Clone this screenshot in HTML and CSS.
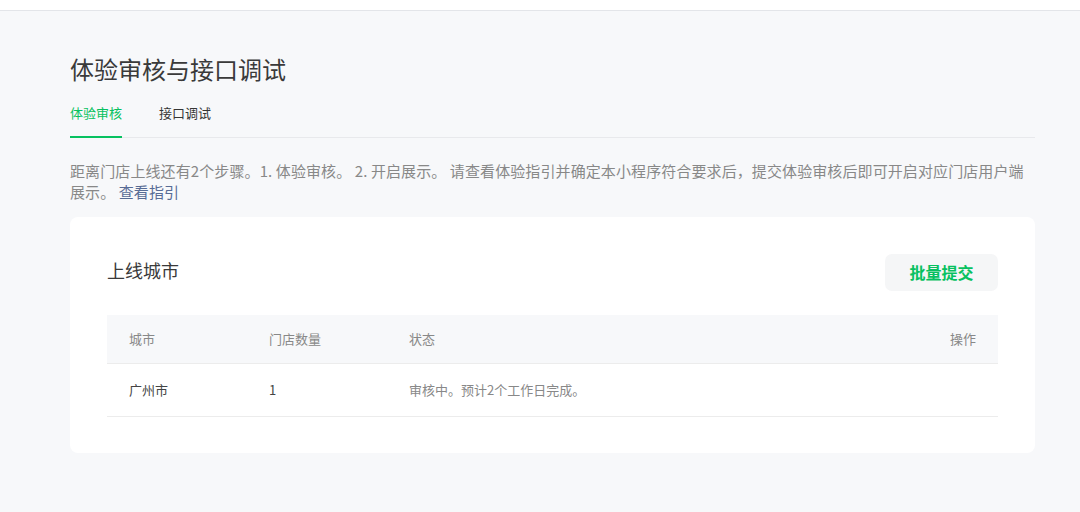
FILE: index.html
```html
<!DOCTYPE html>
<html lang="zh-CN">
<head>
<meta charset="utf-8">
<title>体验审核与接口调试</title>
<link rel="stylesheet" href="styles.css">
</head>
<body>
<div class="topbar"></div>
<main class="main">
  <h1 class="title">体验审核与接口调试</h1>
  <nav class="tabs">
    <a class="tab active">体验审核</a>
    <a class="tab">接口调试</a>
  </nav>
  <p class="desc">距离门店上线还有2个步骤。1. 体验审核。 2. 开启展示。 请查看体验指引并确定本小程序符合要求后，提交体验审核后即可开启对应门店用户端展示。 <a class="link">查看指引</a></p>
  <section class="card">
    <div class="card-head">
      <h2 class="card-title">上线城市</h2>
      <button class="btn">批量提交</button>
    </div>
    <table class="table">
      <thead>
        <tr>
          <th class="c-city">城市</th>
          <th class="c-num">门店数量</th>
          <th>状态</th>
          <th class="c-op">操作</th>
        </tr>
      </thead>
      <tbody>
        <tr>
          <td class="c-city">广州市</td>
          <td class="c-num">1</td>
          <td class="muted">审核中。预计2个工作日完成。</td>
          <td class="c-op"></td>
        </tr>
      </tbody>
    </table>
  </section>
</main>
</body>
</html>
```
FILE: styles.css
```css
* { box-sizing: border-box; }
html, body { margin: 0; padding: 0; }
body {
  background: #f7f8fa;
  font-family: "Noto Sans CJK SC", "Noto Sans", sans-serif;
  color: #353535;
}
.topbar {
  height: 11px;
  background: #fff;
  border-bottom: 1px solid #e3e5e9;
}
.main {
  padding: 42px 45px 0 70px;
}
.title {
  margin: 0;
  font-size: 24px;
  line-height: 32px;
  font-weight: 400;
  color: #3a3a3a;
}
.tabs {
  margin-top: 18px;
  display: flex;
  gap: 37px;
  border-bottom: 1px solid #e8e9ec;
}
.tab {
  font-size: 13px;
  line-height: 20px;
  padding-bottom: 13px;
  border-bottom: 2px solid transparent;
  margin-bottom: -1px;
  color: #353535;
}
.tab.active {
  color: #07c160;
  border-bottom-color: #07c160;
}
.desc {
  margin: 22px 0 0;
  max-width: 958px;
  font-size: 15px;
  line-height: 21px;
  letter-spacing: 0.1px;
  color: #888;
}
.link { color: #576b95; }
.card {
  margin-top: 15px;
  background: #fff;
  border-radius: 8px;
  padding: 37px 37px 36px 37px;
}
.card-head {
  display: flex;
  justify-content: space-between;
  align-items: center;
}
.card-title {
  margin: -6px 0 0;
  font-size: 18px;
  line-height: 26px;
  font-weight: 400;
  color: #3a3a3a;
}
.btn {
  width: 113px;
  height: 37px;
  border: 0;
  border-radius: 7px;
  background: #f5f6f7;
  color: #07c160;
  font-family: inherit;
  font-size: 16px;
  font-weight: 700;
  line-height: 37px;
  padding: 0 0 2px;
}
.table {
  margin-top: 24px;
  width: 100%;
  border-collapse: collapse;
  font-size: 13px;
}
.table th {
  height: 48px;
  background: #f7f8fa;
  color: #888;
  font-weight: 400;
  text-align: left;
  padding: 0 22px;
  border-bottom: 1px solid #ececec;
}
.table td {
  height: 53px;
  padding: 0 22px;
  border-bottom: 1px solid #ececec;
  color: #444;
}
.table .c-city { width: 140px; }
.table .c-num { width: 140px; }
.table .c-op { text-align: right; width: 100px; }
.table td.muted { color: #888; }
```
